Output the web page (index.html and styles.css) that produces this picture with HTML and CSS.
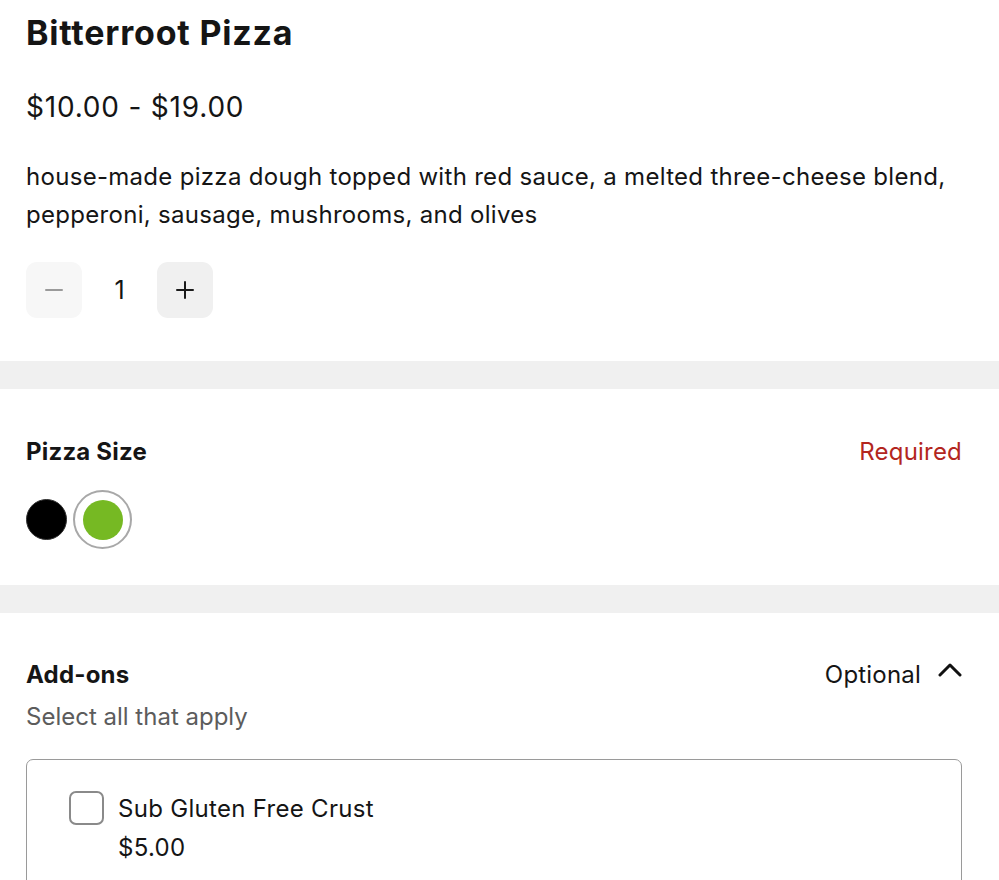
FILE: index.html
```html
<!DOCTYPE html>
<html>
<head>
<meta charset="utf-8">
<link rel="stylesheet" href="styles.css">
</head>
<body>
<div class="page">
  <section class="intro">
    <h1 class="title">Bitterroot Pizza</h1>
    <div class="price">$10.00 - $19.00</div>
    <p class="desc">house-made pizza dough topped with red sauce, a melted three-cheese blend, pepperoni, sausage, mushrooms, and olives</p>
    <div class="qty">
      <button class="qty-btn minus" aria-label="Decrease">
        <svg width="20" height="20" viewBox="0 0 20 20"><path d="M2 10h16" stroke="#9a9a9a" stroke-width="2" stroke-linecap="round"/></svg>
      </button>
      <span class="qty-val">1</span>
      <button class="qty-btn plus" aria-label="Increase">
        <svg width="20" height="20" viewBox="0 0 20 20"><path d="M2 10h16M10 2v16" stroke="#1a1a1a" stroke-width="2" stroke-linecap="round"/></svg>
      </button>
    </div>
  </section>
  <div class="band"></div>
  <section class="group size">
    <div class="group-head">
      <h2 class="group-title">Pizza Size</h2>
      <span class="required">Required</span>
    </div>
    <div class="swatches">
      <span class="dot black"></span>
      <span class="ring"><span class="dot green"></span></span>
    </div>
  </section>
  <div class="band"></div>
  <section class="group addons">
    <div class="group-head">
      <h2 class="group-title">Add-ons</h2>
      <span class="optional">Optional
        <svg class="chev" width="24" height="16" viewBox="0 0 24 16"><path d="M2 13L12 3l10 10" fill="none" stroke="#111" stroke-width="3" stroke-linecap="round" stroke-linejoin="round"/></svg>
      </span>
    </div>
    <div class="hint">Select all that apply</div>
    <div class="options">
      <label class="option">
        <span class="checkbox"></span>
        <span class="opt-text">
          <span class="opt-name">Sub Gluten Free Crust</span>
          <span class="opt-price">$5.00</span>
        </span>
      </label>
    </div>
  </section>
</div>
</body>
</html>
```
FILE: styles.css
```css
* { box-sizing: border-box; }
html, body { margin: 0; padding: 0; background: #fff; }
body {
  font-family: Inter, "Noto Sans", sans-serif;
  color: #151515;
  overflow: hidden;
}
.page { width: 999px; }
.intro { padding: 11px 37px 43px 26px; }
.title {
  margin: 0;
  font-size: 34px;
  font-weight: 700;
  line-height: 44px;
  letter-spacing: 0.8px;
  color: #151515;
}
.price {
  margin-top: 34px;
  font-size: 28px;
  line-height: 36px;
  letter-spacing: 0.8px;
}
.desc {
  margin: 33px 0 0;
  font-size: 24px;
  line-height: 38px;
  letter-spacing: 0.3px;
}
.qty {
  margin-top: 28px;
  display: flex;
  align-items: center;
}
.qty-btn {
  width: 56px;
  height: 56px;
  border: 0;
  border-radius: 11px;
  display: flex;
  align-items: center;
  justify-content: center;
  padding: 0;
}
.qty-btn.minus { background: #f7f7f7; }
.qty-btn.plus { background: #f0f0f0; }
.qty-val {
  width: 75px;
  text-align: center;
  font-size: 25px;
}
.band { height: 28px; background: #f0f0f0; }
.group { padding: 0 37px 0 26px; }
.size { padding-top: 47px; padding-bottom: 36px; }
.group-head {
  display: flex;
  justify-content: space-between;
  align-items: center;
}
.group-title {
  margin: 0;
  font-size: 24px;
  font-weight: 700;
  line-height: 32px;
  letter-spacing: 0.2px;
}
.required { font-size: 24px; color: #b3261e; line-height: 32px; letter-spacing: 0.2px; }
.optional {
  font-size: 24px;
  line-height: 32px;
  letter-spacing: 0.2px;
  display: flex;
  align-items: center;
  gap: 17px;
}
.chev { margin-top: -10px; }
.swatches {
  margin-top: 22px;
  display: flex;
  align-items: center;
  gap: 6px;
}
.ring {
  width: 59px;
  height: 59px;
  border-radius: 50%;
  border: 2px solid #a8a8a8;
  display: flex;
  align-items: center;
  justify-content: center;
}
.dot { width: 41px; height: 41px; border-radius: 50%; display: block; flex: none; }
.dot.black { background: #000; border: 1.5px solid #333; }
.dot.green { background: #76b923; width: 40px; height: 40px; }
.addons { padding-top: 46px; }
.hint {
  margin-top: 10px;
  font-size: 24px;
  line-height: 32px;
  color: #5c5c5c;
}
.options {
  margin-top: 26px;
  border: 1.5px solid #9a9a9a;
  border-radius: 7px;
  padding: 29px 42px 40px;
  height: 200px;
}
.option { display: flex; gap: 14px; align-items: flex-start; }
.checkbox {
  width: 35px;
  height: 34px;
  border: 2px solid #8a8a8a;
  border-radius: 7px;
  flex: none;
  margin-top: 2px;
}
.opt-text { display: flex; flex-direction: column; }
.opt-name, .opt-price { font-size: 24px; line-height: 39px; letter-spacing: 0.3px; }
```
